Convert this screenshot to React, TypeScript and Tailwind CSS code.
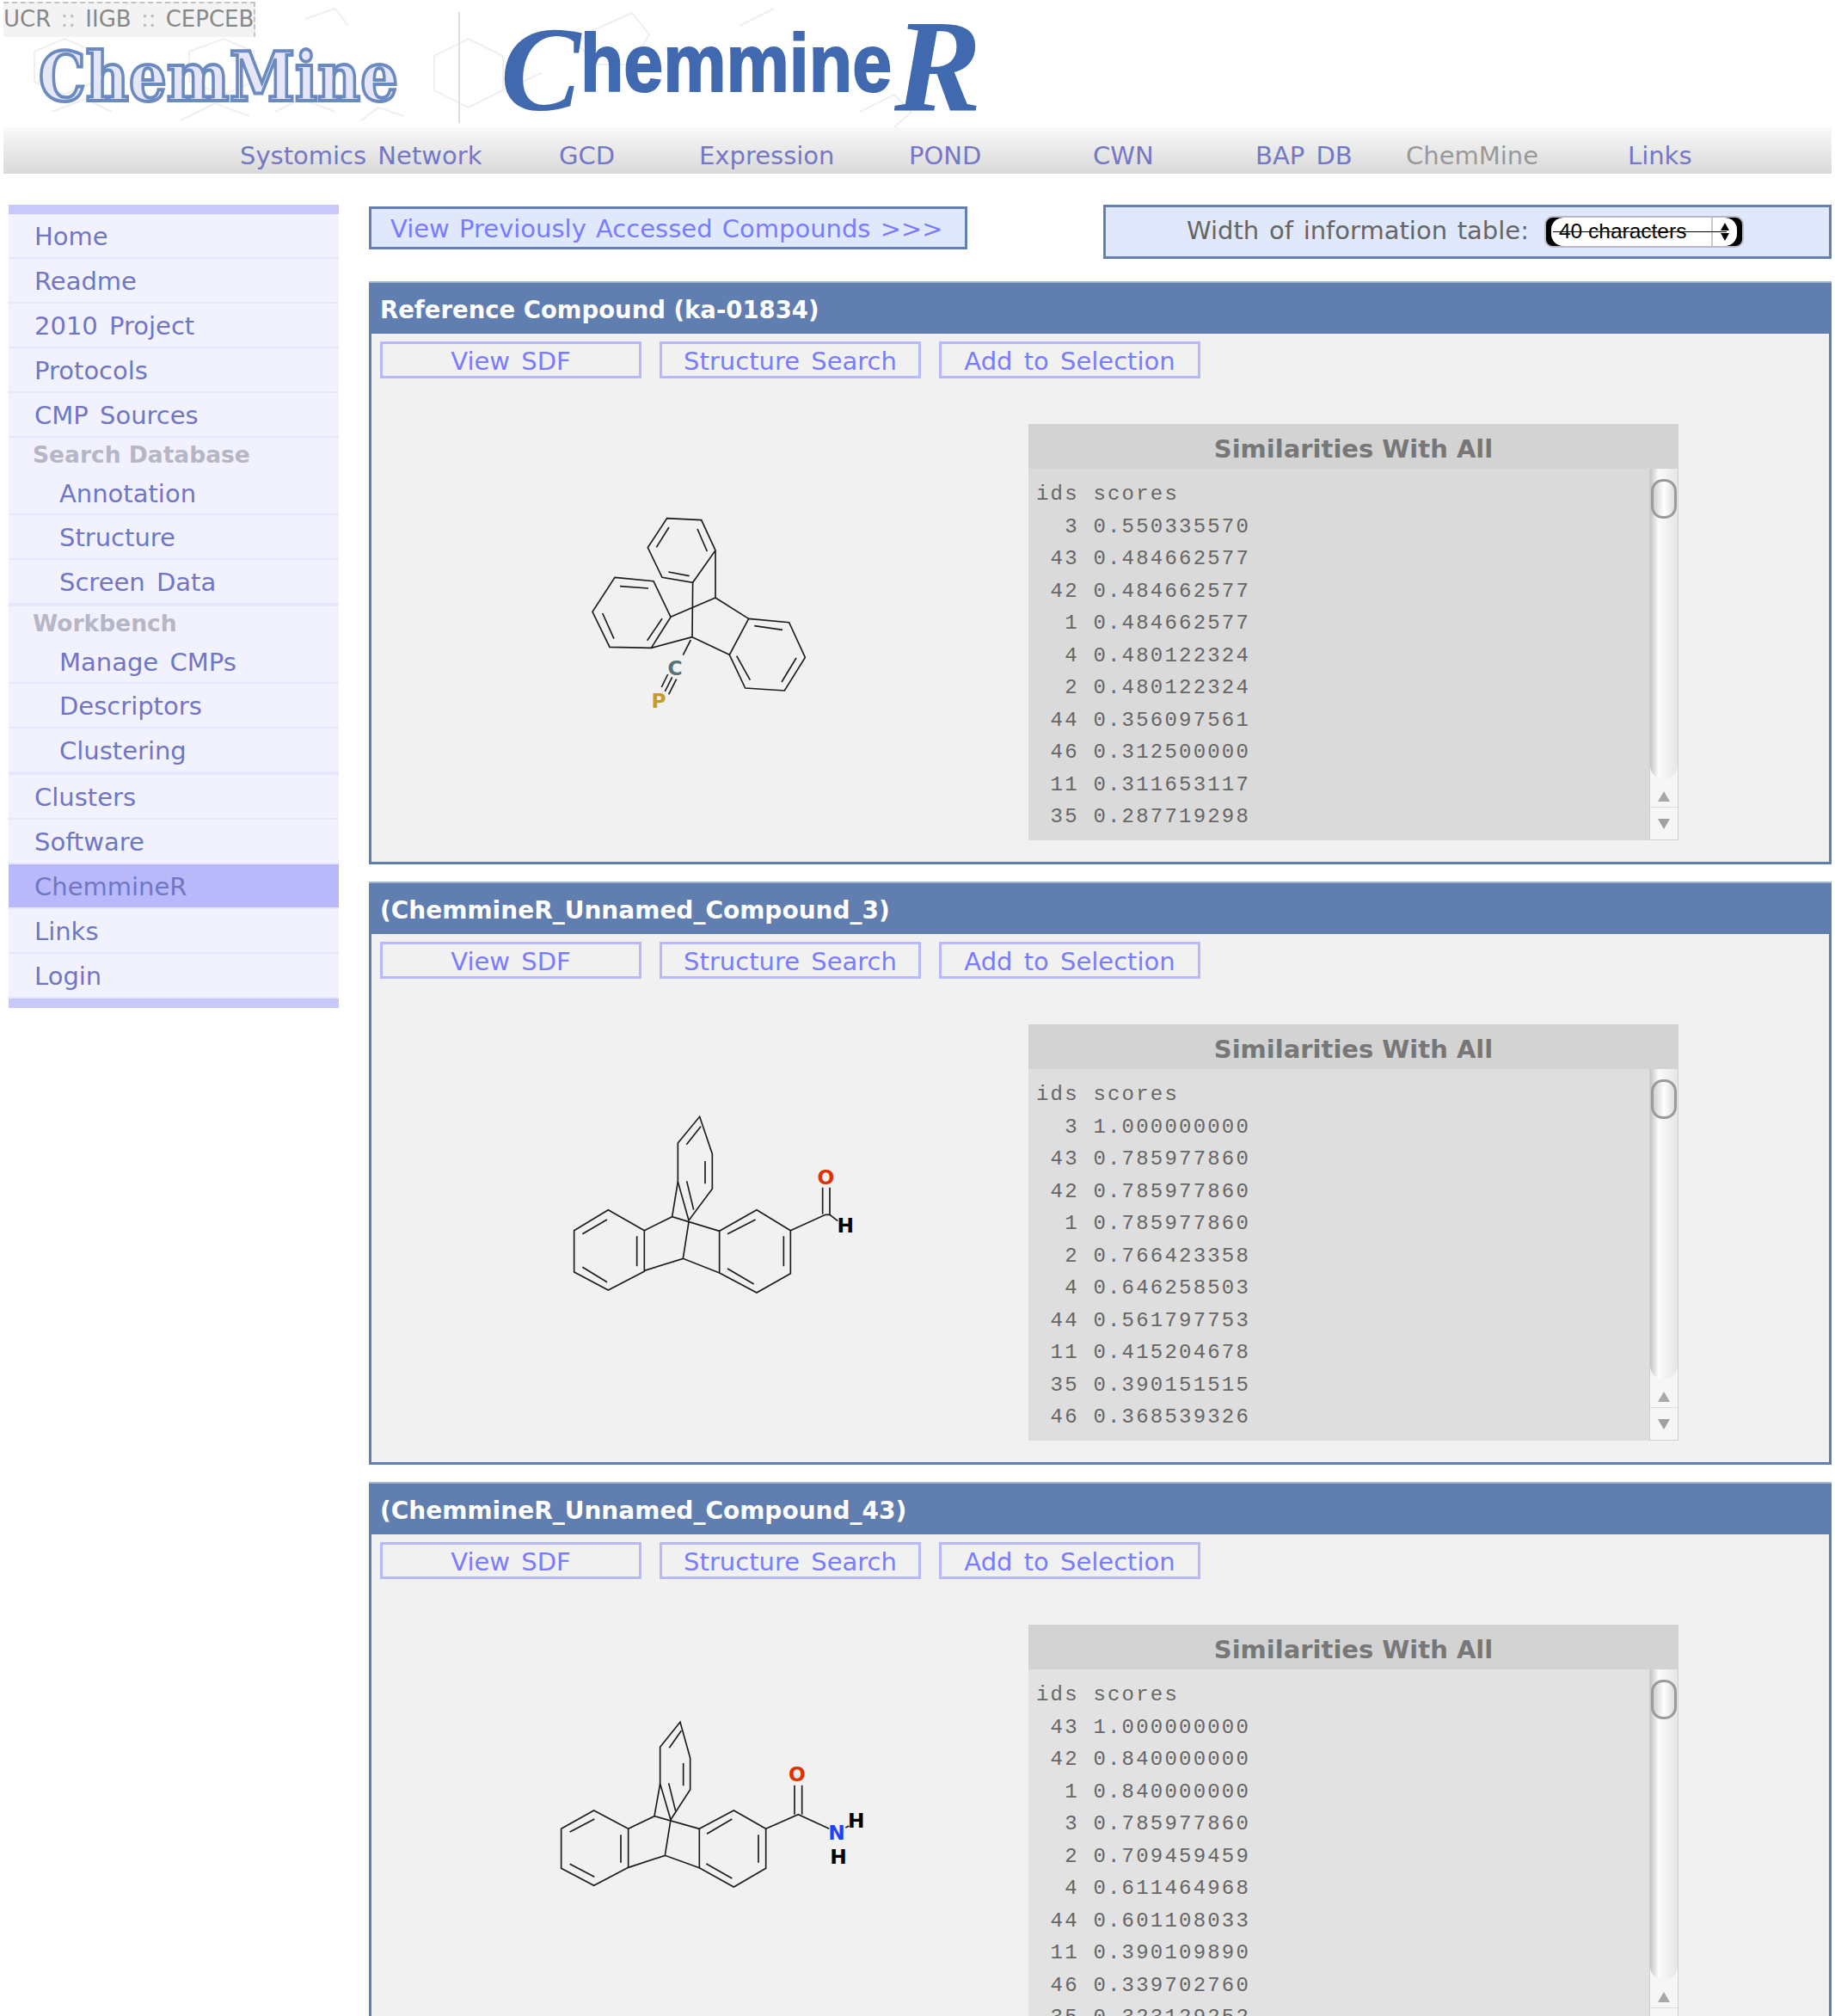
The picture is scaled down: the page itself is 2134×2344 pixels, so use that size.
import type { ReactNode } from "react"

const sans = "font-['DejaVu_Sans',Verdana,sans-serif]"

const sideItems = [
  { label: "Home", kind: "top" },
  { label: "Readme", kind: "top" },
  { label: "2010 Project", kind: "top" },
  { label: "Protocols", kind: "top" },
  { label: "CMP Sources", kind: "top" },
  { label: "Search Database", kind: "head" },
  { label: "Annotation", kind: "first" },
  { label: "Structure", kind: "sub" },
  { label: "Screen Data", kind: "last" },
  { label: "Workbench", kind: "head" },
  { label: "Manage CMPs", kind: "first" },
  { label: "Descriptors", kind: "sub" },
  { label: "Clustering", kind: "last" },
  { label: "Clusters", kind: "top" },
  { label: "Software", kind: "top" },
  { label: "ChemmineR", kind: "active" },
  { label: "Links", kind: "top" },
  { label: "Login", kind: "top" },
]

const atom = { fontSize: 70, fontWeight: 700, fontFamily: "DejaVu Sans", textAnchor: "middle" } as const

const mol1 = (
  <svg viewBox="0 0 1020 840" className="w-[340px] h-[280px]" fill="none">
    <g stroke="#1c1c1c" strokeWidth="5">
      <path d="M407 101L527 107L576 213L497 325L390 307L340 203Z" />
      <path d="M414 132L370 202M513 138L547 216M412 288L485 302" />
      <path d="M225 307L360 320L420 445L352 553L207 550L147 427Z" />
      <path d="M243 338L342 345M182 432L222 521M390 451L338 527" />
      <path d="M692 451L833 464L889 586L817 702L680 693L625 577Z" />
      <path d="M712 476L810 490M858 588L807 672M650 581L697 665" />
      <path d="M497 325L495 515M576 213L576 378M420 445L576 378M352 553L495 515M576 378L692 451M495 515L625 577M490 525L463 578" />
      <path d="M410 645L388 690M425 655L400 705M440 662L413 715" />
    </g>
    <text x="435" y="649" {...atom} fill="#5a7272">C</text>
    <text x="378" y="761" {...atom} fill="#c89a28">P</text>
  </svg>
)

const mol2 = (
  <svg viewBox="0 0 1140 780" className="w-[380px] h-[260px]" fill="none">
    <g stroke="#1c1c1c" strokeWidth="5">
      <path d="M202 413L328 485L328 628L202 693L83 630L83 485Z" />
      <path d="M112 497L198 447M302 505L302 610M112 613L198 665" />
      <path d="M590 487L720 413L838 485L838 635L720 702L590 633Z" />
      <path d="M618 497L716 447M814 505L814 610M618 618L710 672" />
      <path d="M328 485L425 437L590 487M328 625L463 583L590 633M463 583L483 455M425 437L445 315" />
      <path d="M445 180L521 88L565 218L565 340L483 450L445 315Z" />
      <path d="M475 185L525 122M540 243L540 322M476 313L500 413" />
      <path d="M838 485L960 430L975 430L1003 452M950 335L950 428M975 335L975 430" />
    </g>
    <text x="961" y="324" {...atom} fill="#e03000">O</text>
    <text x="1030" y="491" {...atom} fill="#000">H</text>
  </svg>
)

const mol3 = (
  <svg viewBox="0 0 1200 780" className="w-[400px] h-[260px]" fill="none">
    <g stroke="#1c1c1c" strokeWidth="5">
      <path d="M182 378L302 442L302 577L182 640L68 580L68 442Z" />
      <path d="M98 453L184 408M276 463L276 560M98 565L184 610" />
      <path d="M550 442L670 378L782 442L782 580L670 645L550 578Z" />
      <path d="M576 460L664 408M756 463L756 560M574 564L664 615" />
      <path d="M302 442L393 398L550 442M302 577L430 535L550 578M430 535L450 410M393 398L413 285" />
      <path d="M413 157L483 70L518 195L518 305L450 410L413 285Z" />
      <path d="M445 160L487 100M494 213L494 292M443 283L467 380" />
      <path d="M782 442L895 392L1003 442M882 290L882 392M908 290L908 392M1060 438L1072 432" />
    </g>
    <text x="891" y="275" {...atom} fill="#e03000">O</text>
    <text x="1029" y="481" {...atom} fill="#2040ff">N</text>
    <text x="1097" y="437" {...atom} fill="#000">H</text>
    <text x="1035" y="564" {...atom} fill="#000">H</text>
  </svg>
)

const panels = [
  {
    title: "Reference Compound (ka-01834)",
    titleSize: "text-[27.5px]",
    mol: mol1,
    molPos: "ml-[208px] mt-[76px]",
    tableBg: "bg-[#dadada]",
    rows: [
      "  3 0.550335570",
      " 43 0.484662577",
      " 42 0.484662577",
      "  1 0.484662577",
      "  4 0.480122324",
      "  2 0.480122324",
      " 44 0.356097561",
      " 46 0.312500000",
      " 11 0.311653117",
      " 35 0.287719298",
    ],
  },
  {
    title: "(ChemmineR_Unnamed_Compound_3)",
    titleSize: "text-[28px]",
    mol: mol2,
    molPos: "ml-[208px] mt-[78px]",
    tableBg: "bg-[#dedede]",
    rows: [
      "  3 1.000000000",
      " 43 0.785977860",
      " 42 0.785977860",
      "  1 0.785977860",
      "  2 0.766423358",
      "  4 0.646258503",
      " 44 0.561797753",
      " 11 0.415204678",
      " 35 0.390151515",
      " 46 0.368539326",
    ],
  },
  {
    title: "(ChemmineR_Unnamed_Compound_43)",
    titleSize: "text-[28px]",
    mol: mol3,
    molPos: "ml-[198px] mt-[90px]",
    tableBg: "bg-[#e2e2e2]",
    rows: [
      " 43 1.000000000",
      " 42 0.840000000",
      "  1 0.840000000",
      "  3 0.785977860",
      "  2 0.709459459",
      "  4 0.611464968",
      " 44 0.601108033",
      " 11 0.390109890",
      " 46 0.339702760",
      " 35 0.323129252",
    ],
  },
]

function Banner() {
  return (
    <div className="relative h-[148px]">
      <svg viewBox="0 0 1400 148" className="w-[1400px] h-[148px]" fill="none">
        {/* faint molecule wallpaper */}
        <g stroke="#efefef" strokeWidth="2">
          <path d="M40 60L75 45L110 60L110 95L75 110L40 95Z" />
          <path d="M220 60L260 45L295 60L295 95L260 110L220 95Z" />
          <path d="M505 65L545 45L585 65L585 105L545 125L505 105Z" />
          <path d="M690 35L735 15L755 40L735 75L695 75L670 50Z" />
          <path d="M60 130L100 115L130 130M210 140L250 120L290 135M320 130L350 115L390 130M420 140L440 125L470 135" />
          <path d="M585 105L630 85M1000 130L1040 110L1060 130L1040 148M860 30L900 10" />
          <path d="M180 20L215 40M355 22L390 10L405 30" />
        </g>
        <path d="M534 14V143" stroke="#dedede" strokeWidth="2" />
        <text x="45" y="117" fontSize="78" fontWeight="700" fontFamily="DejaVu Serif" textLength="418" lengthAdjust="spacingAndGlyphs" fill="#e6e6fa" stroke="#6b8abf" strokeWidth="4">ChemMine</text>
        <text x="582" y="128" fontSize="140" fontWeight="700" fontStyle="italic" fontFamily="Liberation Serif" fill="#4169b0">C</text>
        <text x="675" y="106" fontSize="95" fontWeight="700" fontFamily="Liberation Sans" textLength="362" lengthAdjust="spacingAndGlyphs" fill="#4169b0" stroke="#4169b0" strokeWidth="2">hemmine</text>
        <text x="1040" y="128" fontSize="152" fontWeight="700" fontStyle="italic" fontFamily="Liberation Serif" fill="#4169b0">R</text>
      </svg>
      <div className="absolute left-[4px] top-[2px] w-[293px] h-[41px] bg-[#f3f3f3] border-t-2 border-r-2 border-dashed border-[#c4c4c4] text-[#888] text-[26px] leading-[36px] [word-spacing:3px] whitespace-nowrap">
        UCR <span className="text-[#bbb]">::</span> IIGB <span className="text-[#bbb]">::</span> CEPCEB
      </div>
    </div>
  )
}

function NavBar() {
  return (
    <div className="mx-[4px] h-[54px] flex items-center pt-[13px] bg-gradient-to-b from-[#f9f9f9] to-[#d9d9d9] text-[#7478c4] text-[29px] [word-spacing:4px] whitespace-nowrap">
      <span className="ml-[275px] w-[371px]">Systomics Network</span>
      <span className="w-[163px]">GCD</span>
      <span className="w-[244px]">Expression</span>
      <span className="w-[214px]">POND</span>
      <span className="w-[189px]">CWN</span>
      <span className="w-[175px]">BAP DB</span>
      <span className="w-[258px] text-[#999]">ChemMine</span>
      <span>Links</span>
    </div>
  )
}

function Sidebar() {
  return (
    <aside className="ml-[10px] w-[384px] mt-[36px] shrink-0 self-start bg-[#f2f2fe] text-[29px] text-[#7076c6] [word-spacing:4px]">
      <div className="h-[11px] bg-[#c8c8fa]" />
      {sideItems.map((it) => {
        if (it.kind === "head")
          return (
            <div key={it.label} className="h-[40px] pl-[28px] flex items-center text-[26.5px] font-bold text-[#b6b6c6] [word-spacing:0px]">
              {it.label}
            </div>
          )
        return (
          <div
            key={it.label}
            className={[
              "flex items-center pt-[3px] border-b-2 border-[#e6e6fe]",
              it.kind === "top" && "h-[52px] pl-[30px]",
              it.kind === "first" && "h-[50px] pl-[59px]",
              it.kind === "sub" && "h-[52px] pl-[59px]",
              it.kind === "last" && "h-[54px] pl-[59px] border-b-4",
              it.kind === "active" && "h-[52px] pl-[30px] bg-[#b8b8fa]",
            ]
              .filter(Boolean)
              .join(" ")}
          >
            {it.label}
          </div>
        )
      })}
      <div className="h-[11px] bg-[#c8c8fa]" />
    </aside>
  )
}

function PseudoScrollbar() {
  return (
    <div className="w-[34px] shrink-0 self-stretch flex flex-col border-l border-r border-b border-[#cfcfcf] bg-[#f6f6f6]">
      <div className="h-[361px] rounded-b-[17px] pt-[12px] bg-gradient-to-r from-[#c4c4c4] via-[#fbfbfb] via-30% to-[#e6e6e6] flex flex-col items-center">
        <div className="w-[30px] h-[46px] rounded-[14px] border-[3px] border-[#9b9b9b] bg-gradient-to-r from-[#cfcfcf] via-white to-[#dedede]" />
      </div>
      <div className="h-[33px] flex items-center justify-center pt-[8px] border-b border-[#ddd]">
        <div className="w-0 h-0 border-x-[7px] border-x-transparent border-b-[12px] border-b-[#a8a8a8]" />
      </div>
      <div className="flex-1 flex items-center justify-center">
        <div className="w-0 h-0 border-x-[7px] border-x-transparent border-t-[12px] border-t-[#a0a0a0]" />
      </div>
    </div>
  )
}

function SimilarityTable({ rows, bg }: { rows: string[]; bg: string }) {
  return (
    <div className={`w-[756px] h-[484px] flex flex-col shrink-0 ${bg}`}>
      <div className="h-[52px] pt-[8px] bg-[#d3d3d3] text-[#777] font-bold text-[29px] flex items-center justify-center">
        Similarities With All
      </div>
      <div className="flex flex-1 min-h-0">
        <div className="flex-1 pl-[9px] pt-[11px] overflow-hidden font-['Liberation_Mono',monospace] text-[24px] leading-[37.5px] tracking-[2.2px] text-[#666] whitespace-pre">
          <div>ids scores</div>
          {rows.map((r, i) => (
            <div key={i}>{r}</div>
          ))}
        </div>
        <PseudoScrollbar />
      </div>
    </div>
  )
}

function ActionButton({ children }: { children: ReactNode }) {
  return (
    <div className="w-[304px] h-[43px] pt-[2px] border-[3px] border-[#b8b8fc] text-[#7a7cff] text-[29px] [word-spacing:4px] leading-[36px] flex items-center justify-center">
      {children}
    </div>
  )
}

function Panel({ p }: { p: (typeof panels)[number] }) {
  return (
    <section className="border-[3px] border-t-0 border-[#617eb0] bg-[#f1f1f1] h-[678px] shrink-0">
      <h2 className={`-mx-[3px] h-[61px] pt-[4px] bg-[#617eb0] border-t-2 border-[#9fb3d6] text-white font-bold pl-[13px] flex items-center ${p.titleSize}`}>
        {p.title}
      </h2>
      <div className="flex gap-[21px] pl-[10px] pt-[9px]">
        <ActionButton>View SDF</ActionButton>
        <ActionButton>Structure Search</ActionButton>
        <ActionButton>Add to Selection</ActionButton>
      </div>
      <div className="flex pt-[53px]">
        <div className="w-[764px] shrink-0">
          <div className={p.molPos}>{p.mol}</div>
        </div>
        <SimilarityTable rows={p.rows} bg={p.tableBg} />
      </div>
    </section>
  )
}

function TopRow() {
  return (
    <div className="flex justify-between items-start h-[89px]">
      <div className="mt-[2px] w-[696px] h-[50px] pt-[4px] bg-[#e0e8fc] border-[3px] border-[#6480b0] text-[#7a7cff] text-[29px] [word-spacing:2px] pl-[22px] flex items-center whitespace-nowrap">
        View Previously Accessed Compounds &gt;&gt;&gt;
      </div>
      <div className="w-[847px] h-[63px] bg-[#e0e8fc] border-[3px] border-[#6480b0] text-[#666] text-[29px] pl-[94px] flex items-center whitespace-nowrap">
        <span className="[word-spacing:2.5px] -mt-[2px]">Width of information table:</span>
        <div className="ml-[18px] w-[232px] h-[37px] rounded-[10px] border-2 border-[#b8b8c8] bg-black flex items-stretch relative overflow-hidden text-black">
          <div className="flex flex-1 mx-[6px] bg-white rounded-[14px] font-['Liberation_Sans',sans-serif] text-[24.5px]">
            <div className="flex-1 pl-[9px] flex items-center">40 characters</div>
            <div className="w-[30px] border-l-2 border-[#c8c8d0] flex flex-col items-center justify-center gap-[3px]">
              <div className="w-0 h-0 border-x-[5px] border-x-transparent border-b-[9px] border-b-black" />
              <div className="w-0 h-0 border-x-[5px] border-x-transparent border-t-[9px] border-t-black" />
            </div>
          </div>
          <div className="absolute left-[8px] right-[18px] top-[16px] h-[1px] bg-black" />
        </div>
      </div>
    </div>
  )
}

export default function App() {
  return (
    <div className={`w-[2134px] h-[2344px] overflow-hidden bg-white ${sans}`}>
      <Banner />
      <NavBar />
      <div className="flex">
        <Sidebar />
        <main className="ml-[35px] w-[1701px] mt-[36px] flex flex-col gap-[20px]">
          <div className="-mb-[20px]">
            <TopRow />
          </div>
          {panels.map((p) => (
            <Panel key={p.title} p={p} />
          ))}
        </main>
      </div>
    </div>
  )
}
